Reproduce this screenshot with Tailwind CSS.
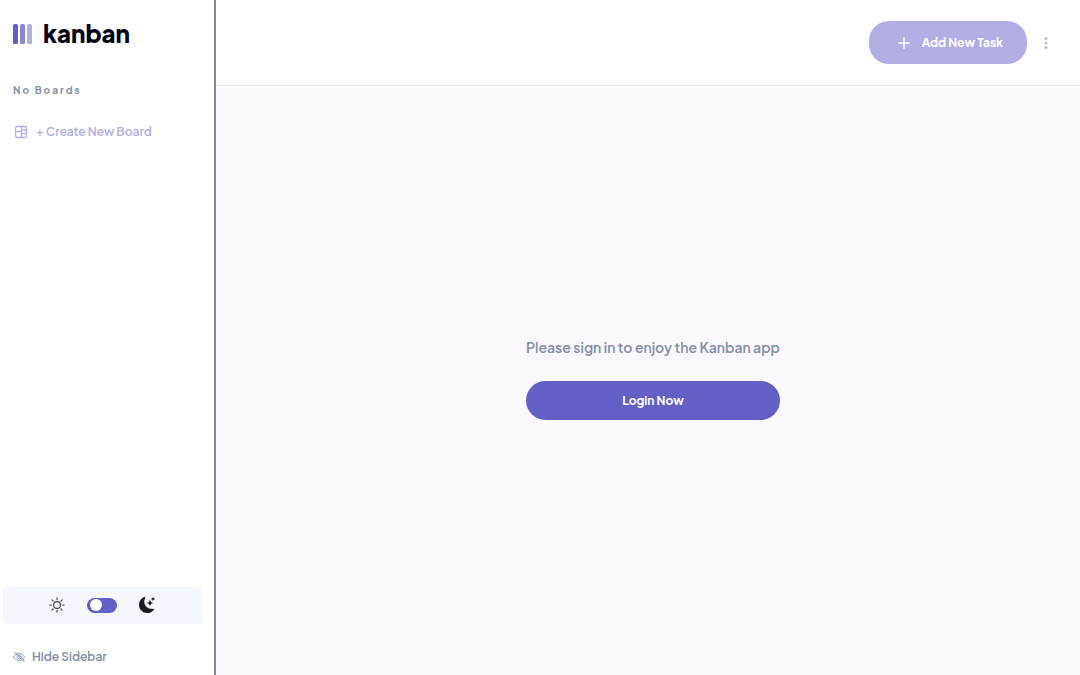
<!DOCTYPE html>
<html lang="en">
<head>
<meta charset="utf-8">
<meta name="viewport" content="width=device-width, initial-scale=1">
<title>Kanban</title>
<script src="https://cdn.jsdelivr.net/npm/@tailwindcss/browser@4"></script>
</head>
<body class="flex min-h-screen bg-[#faf7fd] font-['Plus_Jakarta_Sans',Inter,sans-serif] text-[#828fa3]">
  <aside class="flex w-54 shrink-0 flex-col border-r-2 border-[#88888d] bg-white">
    <h1 class="mt-4 flex h-9 items-center gap-[11px] pl-[13px] text-[24px] leading-8 font-extrabold text-[#000112]">
      <svg class="h-5 w-[19px]" viewBox="0 0 19 20" aria-hidden="true">
        <rect width="5" height="20" rx="1.5" fill="#635fc7"/>
        <rect x="7" width="5" height="20" rx="1.5" fill="#635fc7" opacity=".75"/>
        <rect x="14" width="5" height="20" rx="1.5" fill="#635fc7" opacity=".5"/>
      </svg>
      <span class="pb-0.5">kanban</span>
    </h1>
    <h2 class="mt-7 pl-[13px] text-[10px] leading-5 font-bold tracking-[2px]">No Boards</h2>
    <button type="button" disabled class="mt-2.5 flex h-11 items-center gap-2 pl-3.5 text-[12px] leading-5 font-semibold text-[#b1afe3]">
      <svg class="size-[14px]" viewBox="0 0 14 14" fill="none" stroke="currentColor" stroke-width="1.3" aria-hidden="true">
        <rect x="1.5" y="1.5" width="11" height="11" rx="1.8"/>
        <path d="M1.5 6.5H7.5M7.5 1.5V12.5M7.5 5H12.5M7.5 8.7H12.5"/>
      </svg>
      + Create New Board
    </button>
    <div class="mt-auto mr-3 ml-[3px] flex h-[37px] items-center justify-center gap-[22px] rounded-sm bg-[#f4f7fd] pr-0.5 pb-px">
      <svg class="size-4" viewBox="0 0 16 16" fill="none" stroke="#3b3e48" stroke-width="1.1" stroke-linecap="round" aria-hidden="true">
        <circle cx="8" cy="8" r="3.4"/>
        <path d="M8 .9v1.8M8 13.3v1.8M.9 8h1.8M13.3 8h1.8M2.9 2.9l1.2 1.2M11.9 11.9l1.2 1.2M13.1 2.9l-1.2 1.2M4.1 11.9l-1.2 1.2"/>
      </svg>
      <label class="flex h-[15px] w-[30px] cursor-pointer items-center rounded-full bg-[#635fc7] px-[3px] has-checked:justify-end">
        <input type="checkbox" role="switch" aria-label="Dark mode" class="size-[12px] cursor-pointer appearance-none rounded-full bg-white">
      </label>
      <svg class="size-4" viewBox="0 0 16 16" fill="#181b26" aria-hidden="true">
        <path d="M6 .278a.77.77 0 0 1 .08.858 7.2 7.2 0 0 0-.878 3.46c0 4.021 3.278 7.277 7.318 7.277q.792-.001 1.533-.16a.79.79 0 0 1 .81.316.73.73 0 0 1-.031.893A8.35 8.35 0 0 1 8.344 16C3.734 16 0 12.286 0 7.71 0 4.266 2.114 1.312 5.124.06A.75.75 0 0 1 6 .278"/>
        <path d="M10.794 3.148a.217.217 0 0 1 .412 0l.387 1.162c.173.518.579.924 1.097 1.097l1.162.387a.217.217 0 0 1 0 .412l-1.162.387a1.73 1.73 0 0 0-1.097 1.097l-.387 1.162a.217.217 0 0 1-.412 0l-.387-1.162A1.73 1.73 0 0 0 9.31 6.593l-1.162-.387a.217.217 0 0 1 0-.412l1.162-.387a1.73 1.73 0 0 0 1.097-1.097zM13.863.099a.145.145 0 0 1 .274 0l.258.774c.115.346.386.617.732.732l.774.258a.145.145 0 0 1 0 .274l-.774.258a1.16 1.16 0 0 0-.732.732l-.258.774a.145.145 0 0 1-.274 0l-.258-.774a1.16 1.16 0 0 0-.732-.732l-.774-.258a.145.145 0 0 1 0-.274l.774-.258c.346-.115.617-.386.732-.732z"/>
      </svg>
    </div>
    <button type="button" class="mt-[21px] mb-1.5 flex h-6 items-center gap-[7px] pl-[13px] text-[12px] leading-5 font-semibold">
      <svg class="size-3" viewBox="0 0 12 12" fill="none" stroke="currentColor" stroke-width=".8" stroke-linecap="round" aria-hidden="true">
        <path d="M.5 6C3.2 1.3 8.8 1.3 11.5 6 8.8 10.7 3.2 10.7 .5 6z"/>
        <circle cx="6" cy="6" r="2.1"/>
        <path d="M1 1.3 11 10.7M2.8 1.4 11.3 9.4"/>
      </svg>
      Hide Sidebar
    </button>
  </aside>

  <div class="flex min-w-0 flex-1 flex-col">
    <header class="flex h-[86px] items-center justify-end gap-[17px] border-b border-[#e8e4f6] bg-white pr-8">
      <button type="button" disabled class="flex h-[43px] items-center gap-3 rounded-[20px] bg-[#b1aee3] pr-6 pl-[29px] text-[12px] font-bold text-white">
        <svg class="size-3" viewBox="0 0 12 12" stroke="currentColor" stroke-width="1.5" stroke-linecap="round" aria-hidden="true"><path d="M6 .8v10.4M.8 6h10.4"/></svg>
        Add New Task
      </button>
      <button type="button" disabled aria-label="Board options">
        <svg class="h-3 w-1" viewBox="0 0 4 12" fill="#bbbac6" aria-hidden="true"><circle cx="2" cy="1.5" r="1.5"/><circle cx="2" cy="6" r="1.5"/><circle cx="2" cy="10.5" r="1.5"/></svg>
      </button>
    </header>
    <main class="flex flex-1 items-center justify-center pb-1.5 pl-2.5">
      <div class="flex flex-col gap-[22px]">
        <p class="text-[14px] leading-6 font-semibold">Please sign in to enjoy the Kanban app</p>
        <button type="button" class="h-[39px] rounded-[20px] bg-[#635fc7] text-[12px] font-bold text-white">Login Now</button>
      </div>
    </main>
  </div>
</body>
</html>
